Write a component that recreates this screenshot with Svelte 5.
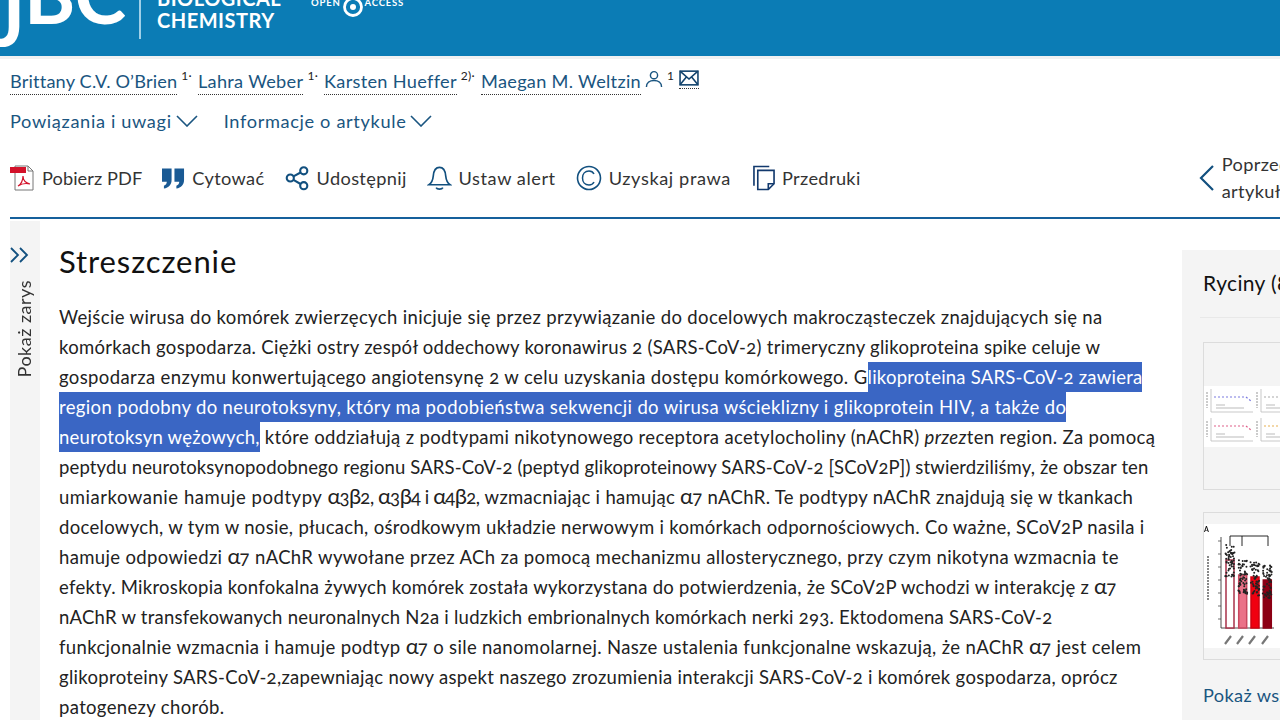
<script>
  const authors = [
    { name: "Brittany C.V. O’Brien", sup: "1·" },
    { name: "Lahra Weber", sup: "1·" },
    { name: "Karsten Hueffer", sup: "2)·" },
    { name: "Maegan M. Weltzin", sup: "1", user: true }
  ];

  // pseudo-random scatter for the bar thumbnail
  let seed = 7;
  function rnd() {
    seed = (seed * 16807) % 2147483647;
    return seed / 2147483647;
  }
  const bars = [
    { x: 22, top: 36, fill: "#fff", stroke: "#a8324a" },
    { x: 34.700, top: 51, fill: "#ea7288", stroke: "#c9485f" },
    { x: 47, top: 53, fill: "#f00010", stroke: "#d00010" },
    { x: 59.300, top: 56, fill: "#8c0014", stroke: "#8c0014" }
  ];
  const dots = bars.flatMap((b) =>
    Array.from({ length: 60 }, () => ({
      x: b.x + 4 + (rnd() - 0.5) * 9,
      y: b.top - 15 + rnd() * 34
    }))
  );
  const minis = [
    { x: 4, y: 2, c: "#7a7ae0" },
    { x: 54, y: 2, c: "#aaa" },
    { x: 4, y: 31, c: "#e0608a" },
    { x: 54, y: 31, c: "#e8b050" }
  ];
</script>

<div class="page">
  <header class="banner">
    <div class="logo">
      <span class="j">J</span><span class="bc">BC</span>
    </div>
    <div class="bar"></div>
    <div class="journal">BIOLOGICAL<br />CHEMISTRY</div>
    <div class="oa">
      <span>OPEN</span>
      <svg width="22" height="22" viewBox="0 0 22 22">
        <circle cx="11" cy="11" r="8.500" fill="none" stroke="#fff" stroke-width="2.800" />
        <circle cx="11" cy="11" r="3" fill="#fff" />
      </svg>
      <span>ACCESS</span>
    </div>
  </header>
  <div class="band"></div>

  <div class="authors">
    {#each authors as a}
      <a class="author" href="#top">{a.name}</a>
      {#if a.user}
        <svg class="user" width="18" height="18" viewBox="0 0 19 19" fill="none" stroke="#1a5580" stroke-width="1.500">
          <circle cx="9.500" cy="5.500" r="3.800" />
          <path d="M1.500 18c0-4.500 3.500-7 8-7s8 2.500 8 7" />
        </svg>
      {/if}
      <sup>{a.sup}</sup>
    {/each}
    <a class="mail" href="#top">
      <svg width="20" height="16" viewBox="0 0 19 15" fill="none" stroke="#12436d" stroke-width="1.500">
        <rect x="1" y="1" width="17" height="13" />
        <path d="M1 1l8.500 7.500L18 1M1 14l6-7.500M18 14l-6-7.500" />
      </svg>
    </a>
  </div>

  <div class="toggles">
    <span class="toggle">Powiązania i uwagi
      <svg width="22" height="12" viewBox="0 0 22 12" fill="none" stroke="#1a5580" stroke-width="1.600"><path d="M1 1l10 10L21 1" /></svg>
    </span>
    <span class="toggle">Informacje o artykule
      <svg width="22" height="12" viewBox="0 0 22 12" fill="none" stroke="#1a5580" stroke-width="1.600"><path d="M1 1l10 10L21 1" /></svg>
    </span>
  </div>

  <nav class="tools">
    <span class="tool">
      <svg width="25" height="26" viewBox="0 0 25 26">
        <path d="M5 1h13l5 5v19H5z" fill="#fff" stroke="#777" stroke-width="1" />
        <path d="M18 1v5h5" fill="none" stroke="#777" />
        <rect x="0" y="2" width="16" height="6" fill="#d3122a" />
        <path d="M8 21c3-1 5-6 5-10 0 4 3 7 7 8-4-1-9 0-12 2z" fill="none" stroke="#d3122a" stroke-width="1.200" />
      </svg>
      Pobierz PDF
    </span>
    <span class="tool">
      <svg width="23" height="23" viewBox="0 0 24 23" fill="#1a5a94">
        <path d="M0 1h10v12c0 5-3 8-8 9v-3c2-.5 3-2 3-4H0zM13 1h10v12c0 5-3 8-8 9v-3c2-.5 3-2 3-4h-5z" />
      </svg>
      Cytować
    </span>
    <span class="tool">
      <svg width="25" height="26" viewBox="0 0 26 26" fill="none" stroke="#12507f" stroke-width="2.200">
        <circle cx="19.500" cy="5.500" r="3.700" />
        <circle cx="5.500" cy="13" r="3.700" />
        <circle cx="19.500" cy="21" r="3.700" />
        <path d="M16.200 7.300l-7.400 4M8.800 15l7.400 4.200" />
      </svg>
      Udostępnij
    </span>
    <span class="tool">
      <svg width="25" height="26" viewBox="0 0 26 26" fill="none" stroke="#12507f" stroke-width="1.700">
        <path d="M2 20c3-2 4-4 4.500-9C7 5 9 2 13 2s6 3 6.500 9c.5 5 1.500 7 4.500 9z" />
        <path d="M9.500 23c1 2 6 2 7 0" />
      </svg>
      Ustaw alert
    </span>
    <span class="tool">
      <svg width="26" height="26" viewBox="0 0 26 26" fill="none" stroke="#12507f">
        <circle cx="13" cy="13" r="11.500" stroke-width="1.600" />
        <path d="M18 9c-1-2-3-3-5-3-4 0-6.500 3-6.500 7s2.500 7 6.500 7c2 0 4-1 5-3" stroke-width="1.500" />
      </svg>
      Uzyskaj prawa
    </span>
    <span class="tool">
      <svg width="22" height="26" viewBox="0 0 23 26" fill="none" stroke="#12396d" stroke-width="1.700">
        <path d="M17 1H1v20" />
        <path d="M5 5h17v14l-6 6H5z" />
        <path d="M16 25v-6h6" />
      </svg>
      Przedruki
    </span>
    <div class="prev">
      <svg width="15" height="26" viewBox="0 0 15 26" fill="none" stroke="#12507f" stroke-width="2.200"><path d="M14 1L2 13l12 12" /></svg>
      <span class="prev-text">Poprzedni<br />artykuł</span>
    </div>
  </nav>
  <div class="rule"></div>

  <div class="content">
    <aside class="rail">
      <svg width="20" height="16" viewBox="0 0 20 16" fill="none" stroke="#12507f" stroke-width="1.800">
        <path d="M1 1l7 7-7 7M10 1l7 7-7 7" />
      </svg>
      <span class="rail-label">Pokaż zarys</span>
    </aside>

    <main class="article">
      <h2>Streszczenie</h2>
      <p>
        <span class="line">Wejście wirusa do komórek zwierzęcych inicjuje się przez przywiązanie do docelowych makrocząsteczek znajdujących się na</span>
        <span class="line">komórkach gospodarza. Ciężki ostry zespół oddechowy koronawirus 2 (SARS-CoV-2) trimeryczny glikoproteina spike celuje w</span>
        <span class="line">gospodarza enzymu konwertującego angiotensynę 2 w celu uzyskania dostępu komórkowego. G<mark class="m3">likoproteina SARS-CoV-2 zawiera</mark></span>
        <span class="line"><mark>region podobny do neurotoksyny, który ma podobieństwa sekwencji do wirusa wścieklizny i glikoprotein HIV, a także do</mark></span>
        <span class="line"><mark class="m5">neurotoksyn wężowych,</mark> które oddziałują z podtypami nikotynowego receptora acetylocholiny (nAChR) <em>przez</em>ten region. Za pomocą</span>
        <span class="line">peptydu neurotoksynopodobnego regionu SARS-CoV-2 (peptyd glikoproteinowy SARS-CoV-2 [SCoV2P]) stwierdziliśmy, że obszar ten</span>
        <span class="line"><span class="w1">umiarkowanie hamuje podtypy</span> <span class="w2"><i class="gk">α</i>3<i class="gk">β</i>2, <i class="gk">α</i>3<i class="gk">β</i>4 i <i class="gk">α</i>4<i class="gk">β</i>2,</span> wzmacniając i hamując <i class="gk">α</i>7 nAChR. Te podtypy nAChR znajdują się w tkankach</span>
        <span class="line">docelowych, w tym w nosie, płucach, ośrodkowym układzie nerwowym i komórkach odpornościowych. Co ważne, SCoV2P nasila i</span>
        <span class="line">hamuje odpowiedzi <i class="gk">α</i>7 nAChR wywołane przez ACh za pomocą mechanizmu allosterycznego, przy czym nikotyna wzmacnia te</span>
        <span class="line">efekty. Mikroskopia konfokalna żywych komórek została wykorzystana do potwierdzenia, że SCoV2P wchodzi w interakcję z <i class="gk">α</i>7</span>
        <span class="line">nAChR w transfekowanych neuronalnych N2a i ludzkich embrionalnych komórkach nerki 293. Ektodomena SARS-CoV-2</span>
        <span class="line">funkcjonalnie wzmacnia i hamuje podtyp <i class="gk">α</i>7 o sile nanomolarnej. Nasze ustalenia funkcjonalne wskazują, że nAChR <i class="gk">α</i>7 jest celem</span>
        <span class="line">glikoproteiny SARS-CoV-2,zapewniając nowy aspekt naszego zrozumienia interakcji SARS-CoV-2 i komórek gospodarza, oprócz</span>
        <span class="line">patogenezy chorób.</span>
      </p>
    </main>

    <aside class="figures">
      <h3>Ryciny (8)</h3>
      <div class="divider"></div>
      <div class="thumb first">
        <svg class="shot" width="130" height="61" viewBox="0 0 130 61">
          <rect width="130" height="61" fill="#fff" />
          {#each minis as m}
            <g transform="translate({m.x} {m.y})">
              <path d="M-1 4v16" stroke="#bbb" stroke-width="1.500" stroke-dasharray="2 1" />
              <path d="M3 1v23h42" fill="none" stroke="#bbb" stroke-width="0.800" />
              <path d="M6 9h32l5 4" fill="none" stroke={m.c} stroke-width="1.200" stroke-dasharray="2 2" />
              <path d="M8 17h9M8 20h28" stroke="#bbb" stroke-width="1" />
            </g>
          {/each}
        </svg>
      </div>
      <div class="thumb second">
        <svg class="shot" width="80" height="124" viewBox="0 0 80 124">
          <rect width="80" height="124" fill="#fff" />
          <text x="0" y="8" font-size="7" font-weight="700" font-family="Lato, sans-serif" fill="#111">A</text>
          <path d="M17 13v91h53" fill="none" stroke="#222" stroke-width="0.800" />
          <path d="M14 17h3M14 30h3M14 43h3M14 56h3M14 69h3M14 82h3M14 95h3" stroke="#333" stroke-width="0.700" />
          <path d="M26 22v-10h38v10M38 12v10" fill="none" stroke="#111" stroke-width="0.900" />
          {#each bars as b}
            <rect x={b.x} y={b.top} width="8" height={104 - b.top} fill={b.fill} stroke={b.stroke} stroke-width="1.500" />
          {/each}
          {#each dots as d}
            <circle cx={d.x} cy={d.y} r="1" fill="#222" />
          {/each}
          <path d="M4 32v45" stroke="#888" stroke-width="2" stroke-dasharray="2 1" />
          <path d="M21 120l6-8M33 120l6-8M45 120l6-8M58 120l6-8" stroke="#777" stroke-width="2.200" />
        </svg>
      </div>
      <a class="show-all" href="#top">Pokaż wszystkie ryciny</a>
    </aside>
  </div>
</div>

<style>
  :global(body) {
    margin: 0;
    background: #fff;
    overflow: hidden;
  }

  .page {
    width: 1280px;
    height: 720px;
    overflow: hidden;
    font-family: Lato, "Open Sans", sans-serif;
    font-size: 18.200px;
    color: #222;
    letter-spacing: 0.350px;
  }

  .banner {
    height: 56px;
    background: #0b7cb5;
    display: flex;
    align-items: flex-start;
    overflow: hidden;
    color: #fff;
  }

  .logo {
    width: 125px;
    height: 47px;
    flex: none;
    display: flex;
    align-items: flex-end;
    justify-content: flex-end;
    font-weight: 700;
    font-size: 78px;
    line-height: 60px;
    letter-spacing: -1px;
    overflow: hidden;
  }

  .logo .j {
    padding-bottom: 0;
  }

  .logo .bc {
    padding-bottom: 23px;
  }

  .bar {
    width: 2px;
    height: 39px;
    margin-left: 14px;
    background: #9fd0e8;
    flex: none;
  }

  .journal {
    margin: -13px 0 0 16px;
    font-size: 20px;
    line-height: 22px;
    font-weight: 700;
    letter-spacing: 0.500px;
    width: 154px;
    flex: none;
  }

  .oa {
    display: flex;
    align-items: center;
    gap: 1px;
    margin: -4px 0 0 0;
    font-size: 9.500px;
    font-weight: 700;
    letter-spacing: 0.800px;
  }

  .oa span {
    margin-top: -9px;
  }

  .band {
    height: 3px;
    background: #f0f1f2;
  }

  .authors {
    display: flex;
    align-items: flex-start;
    height: 38px;
    padding: 9px 0 0 10px;
    box-sizing: border-box;
    line-height: 26px;
    letter-spacing: 0.290px;
  }

  .author {
    color: #1a5580;
    text-decoration: none;
    border-bottom: 1px dotted #333;
    height: 26px;
  }

  .author:first-child {
    letter-spacing: 0.160px;
  }

  sup {
    font-size: 12px;
    line-height: 16px;
    margin: 0 6px 0 4px;
    color: #222;
  }

  .user {
    margin: 2px 0 0 4px;
    flex: none;
  }

  .user + sup {
    margin-right: 4px;
  }

  .mail {
    height: 18px;
    margin: 2px 0 0 1px;
    border-bottom: 1px dotted #333;
    line-height: 0;
    padding: 0;
  }

  .toggles {
    display: flex;
    gap: 26px;
    height: 42px;
    padding: 6px 0 0 10px;
    box-sizing: border-box;
    line-height: 24px;
    color: #1a5580;
    letter-spacing: 0.650px;
  }

  .toggle {
    display: flex;
    align-items: center;
    gap: 4px;
  }

  .tools {
    display: flex;
    align-items: center;
    height: 78px;
    padding: 0 0 0 10px;
    box-sizing: border-box;
    gap: 20px;
    white-space: nowrap;
    overflow: hidden;
    color: #333;
  }

  .tool {
    display: flex;
    align-items: center;
    gap: 7px;
  }

  .tool:nth-child(1) {
    letter-spacing: 0.080px;
  }

  .tool:nth-child(4) {
    letter-spacing: 0.550px;
  }

  .tool:nth-child(5) {
    letter-spacing: 0.600px;
  }

  .tool:nth-child(6) {
    margin-left: 2px;
  }

  .prev {
    margin-left: 318px;
    display: flex;
    align-items: center;
    gap: 8px;
    line-height: 27px;
    flex: none;
  }

  .rule {
    height: 2px;
    margin-left: 10px;
    background: #15609c;
  }

  .content {
    display: flex;
    height: 500px;
    margin-top: 2px;
    padding-left: 10px;
  }

  .rail {
    width: 30px;
    background: #f4f4f4;
    flex: none;
    display: flex;
    flex-direction: column;
    align-items: flex-start;
    padding-top: 26px;
    box-sizing: border-box;
    gap: 17px;
  }

  .rail-label {
    writing-mode: vertical-rl;
    transform: rotate(180deg);
    margin-left: 4px;
    font-size: 18px;
    line-height: 20px;
    letter-spacing: 0.500px;
    color: #333;
  }

  .article {
    width: 1142px;
    flex: none;
    padding: 20px 0 0 19px;
    box-sizing: border-box;
  }

  h2 {
    margin: 0;
    font-size: 31px;
    font-weight: 400;
    line-height: 40px;
    letter-spacing: 0.900px;
    color: #111;
  }

  p {
    margin: 21px 0 0;
    font-size: 18.500px;
    line-height: 30px;
    white-space: nowrap;
    font-variant-numeric: oldstyle-nums;
  }

  .line {
    display: block;
    height: 30px;
  }

  /* the reference font is a touch narrower on capitals, so some lines need tighter tracking */
  .line:nth-child(2) { letter-spacing: 0.283px; }
  .line:nth-child(3) { letter-spacing: 0.380px; }
  .line:nth-child(6) { letter-spacing: 0.130px; }
  .line:nth-child(7) { letter-spacing: 0.310px; }
  .line:nth-child(8) { letter-spacing: 0.310px; }
  .line:nth-child(10) { letter-spacing: 0.270px; }
  .line:nth-child(11) { letter-spacing: 0.250px; }
  .line:nth-child(13) { letter-spacing: 0.310px; }

  .w1 {
    letter-spacing: 0.530px;
  }

  .w2 {
    letter-spacing: -0.400px;
  }

  mark {
    display: inline-block;
    height: 30px;
    background: #3a66c4;
    color: #fff;
  }

  .m3 {
    letter-spacing: 0.220px;
  }

  .m5 {
    letter-spacing: 0.250px;
  }

  .gk {
    font-style: normal;
    font-size: 22px;
    line-height: 0;
    letter-spacing: -1px;
  }

  .figures {
    width: 200px;
    flex: none;
    margin-top: 29px;
    background: #f4f4f4;
    padding: 19px 0 0 21px;
    box-sizing: border-box;
    white-space: nowrap;
    overflow: hidden;
  }

  h3 {
    margin: 0;
    font-size: 21px;
    font-weight: 400;
    line-height: 28px;
    color: #111;
  }

  .divider {
    height: 1px;
    margin: 20px 0 24px -3px;
    background: #e8e8e8;
  }

  .thumb {
    width: 178px;
    height: 148px;
    border: 1px solid #dcdcdc;
    box-sizing: border-box;
    display: flex;
    align-items: center;
    overflow: hidden;
    margin-bottom: 22px;
  }

  .shot {
    flex: none;
    filter: blur(0.400px);
  }

  .show-all {
    display: block;
    margin-top: 2px;
    color: #1a5580;
    text-decoration: none;
    line-height: 26px;
  }
</style>
